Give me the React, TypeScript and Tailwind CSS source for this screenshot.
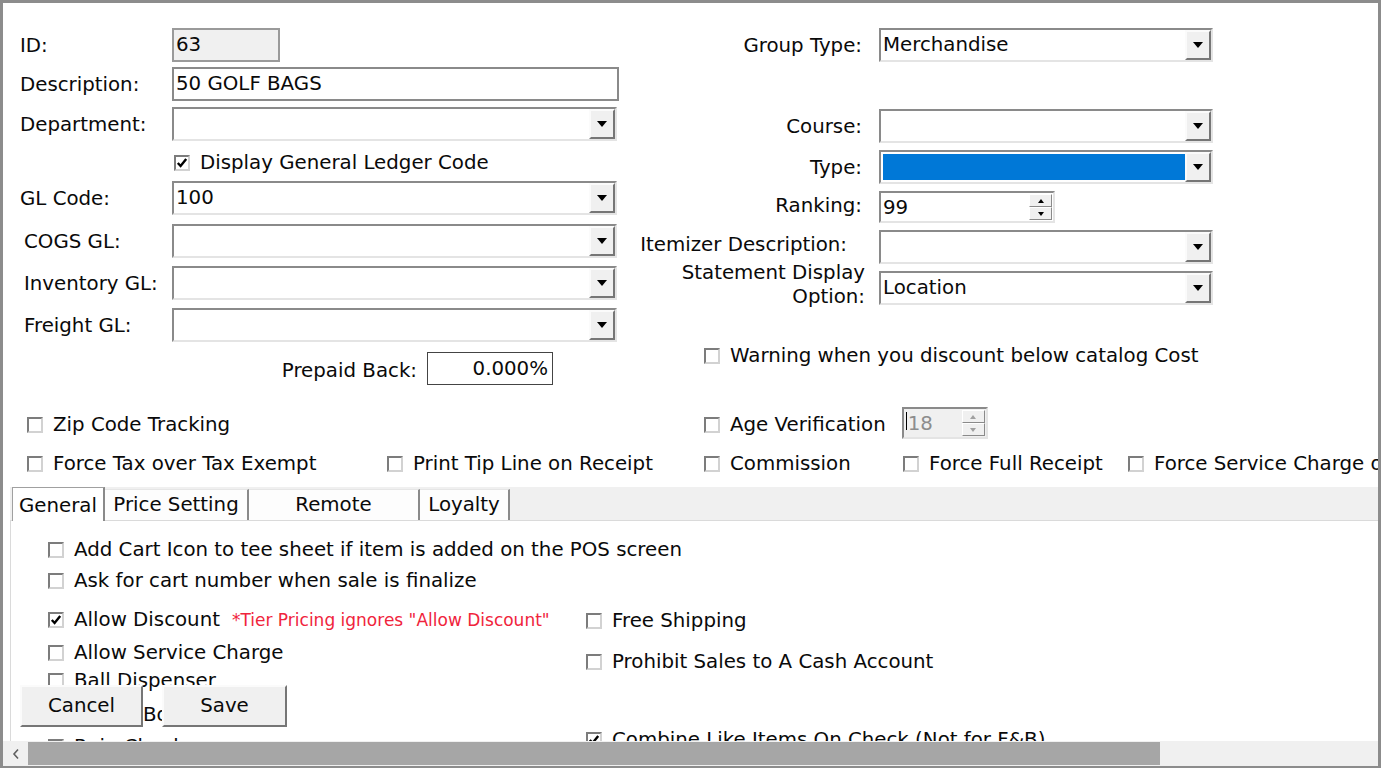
import React from 'react';

const sunken = 'border-2 border-t-[#8a8a8a] border-l-[#8a8a8a] border-b-[#e4e4e4] border-r-[#e4e4e4]';
const raised = 'border-2 border-t-[#fbfbfb] border-l-[#fbfbfb] border-b-[#767676] border-r-[#767676]';

function Tri({ up = false, small = false, color = '#000' }: { up?: boolean; small?: boolean; color?: string }) {
  const w = small ? 6 : 10;
  const h = small ? 4 : 6;
  return (
    <svg width={w} height={h} viewBox={`0 0 ${w} ${h}`}>
      <path d={up ? `M0 ${h}H${w}L${w / 2} 0z` : `M0 0H${w}L${w / 2} ${h}z`} fill={color} />
    </svg>
  );
}

function CheckBox({ checked = false }: { checked?: boolean }) {
  return (
    <span className="w-[16px] h-[16px] shrink-0 bg-white flex items-center justify-center border-2 border-t-[#7c7c7c] border-l-[#7c7c7c] border-b-[#d2d2d2] border-r-[#d2d2d2]">
      {checked && (
        <svg width="12" height="12" viewBox="0 0 12 12">
          <path d="M1.8 6L4.6 9L10.2 2" stroke="#000" strokeWidth="2.4" fill="none" />
        </svg>
      )}
    </span>
  );
}

function CheckItem({ label, checked = false, className = '' }: { label: string; checked?: boolean; className?: string }) {
  return (
    <div className={`flex items-center gap-[10px] h-[28px] whitespace-nowrap ${className}`}>
      <CheckBox checked={checked} />
      <span>{label}</span>
    </div>
  );
}

function Select({ value = '', w, highlight = false }: { value?: string; w: string; highlight?: boolean }) {
  return (
    <div className={`h-[34px] flex bg-white ${sunken} ${w}`}>
      <div className="flex-1 flex items-center pl-[2px] py-[2px] min-w-0">
        {highlight ? (
          <div className="w-full h-full bg-[#0078d7]" />
        ) : (
          <span className="whitespace-nowrap">{value}</span>
        )}
      </div>
      <div className={`w-[26px] h-full bg-[#f0f0f0] flex items-center justify-center ${raised}`}>
        <Tri />
      </div>
    </div>
  );
}

function Spinner({ value, w, disabled = false }: { value: string; w: string; disabled?: boolean }) {
  return (
    <div className={`h-[32px] flex ${sunken} ${w} ${disabled ? 'bg-[#f0f0f0]' : 'bg-white'}`}>
      <div className={`flex-1 flex items-center pl-[2px] pt-[2px] ${disabled ? 'text-[#8d8d8d]' : ''}`}>
        {disabled && <span className="w-px h-[18px] bg-black mr-[1px] -mt-[6px]" />}
        {value}
      </div>
      <div className="w-[24px] flex flex-col py-[1px] pr-[1px]">
        <div className="flex-1 bg-[#f0f0f0] flex items-center justify-center border border-t-white border-l-white border-b-[#8a8a8a] border-r-[#8a8a8a]">
          <Tri up small color={disabled ? '#a0a0a0' : '#000'} />
        </div>
        <div className="flex-1 bg-[#f0f0f0] flex items-center justify-center border border-t-white border-l-white border-b-[#8a8a8a] border-r-[#8a8a8a]">
          <Tri small color={disabled ? '#a0a0a0' : '#000'} />
        </div>
      </div>
    </div>
  );
}

function LeftRow({ label, mt, indent = false, children }: { label: string; mt: string; indent?: boolean; children: React.ReactNode }) {
  return (
    <div className={`flex items-center ${mt}`}>
      <span className={`w-[152px] whitespace-nowrap pt-[2px] ${indent ? 'pl-[4px]' : ''}`}>{label}</span>
      {children}
    </div>
  );
}

function RightRow({ label, mt, children, labelClass = '' }: { label: React.ReactNode; mt: string; children: React.ReactNode; labelClass?: string }) {
  return (
    <div className={`flex items-center ${mt}`}>
      <span className={`w-[222px] text-right whitespace-nowrap pt-[2px] ${labelClass}`}>{label}</span>
      <div className="ml-[17px]">{children}</div>
    </div>
  );
}

export default function App() {
  return (
    <div className="w-[1381px] h-[768px] overflow-hidden bg-white flex flex-col border-t-[3px] border-l-[3px] border-r-[3px] border-b-2 border-[#8c8c8c] font-['DejaVu_Sans',sans-serif] text-[19.8px] leading-none text-[#0a0a0a]">
      <div className="relative flex-1 overflow-hidden flex flex-col">
        {/* top form */}
        <div className="flex pt-[25px]">
          <div className="w-[637px] shrink-0 pl-[17px] flex flex-col">
            <LeftRow label="ID:" mt="mt-0">
              <div className="w-[108px] h-[34px] bg-[#f0f0f0] border-2 border-[#9a9a9a] flex items-center pl-[2px]">63</div>
            </LeftRow>
            <LeftRow label="Description:" mt="mt-[5px]">
              <div className="w-[447px] h-[34px] bg-white border-2 border-[#8a8a8a] flex items-center pl-[2px]">50 GOLF BAGS</div>
            </LeftRow>
            <LeftRow label="Department:" mt="mt-[6px]">
              <Select w="w-[445px]" />
            </LeftRow>
            <div className="h-[30px] mt-[7px] flex items-center ml-[154px]">
              <CheckItem label="Display General Ledger Code" checked />
            </div>
            <LeftRow label="GL Code:" mt="mt-[3px]">
              <Select w="w-[445px]" value="100" />
            </LeftRow>
            <LeftRow label="COGS GL:" mt="mt-[9px]" indent>
              <Select w="w-[445px]" />
            </LeftRow>
            <LeftRow label="Inventory GL:" mt="mt-[8px]" indent>
              <Select w="w-[445px]" />
            </LeftRow>
            <LeftRow label="Freight GL:" mt="mt-[8px]" indent>
              <Select w="w-[445px]" />
            </LeftRow>
            <div className="flex items-center mt-[10px]">
              <span className="w-[397px] text-right pt-[5px]">Prepaid Back:</span>
              <div className="ml-[10px] w-[126px] h-[33px] bg-white border border-[#444] flex items-center justify-end pr-[4px]">0.000%</div>
            </div>
          </div>

          <div className="flex flex-col">
            <RightRow label="Group Type:" mt="mt-0">
              <Select w="w-[334px]" value="Merchandise" />
            </RightRow>
            <RightRow label="Course:" mt="mt-[47px]">
              <Select w="w-[334px]" />
            </RightRow>
            <RightRow label="Type:" mt="mt-[7px]">
              <Select w="w-[334px]" highlight />
            </RightRow>
            <RightRow label="Ranking:" mt="mt-[7px]" labelClass="-mt-[4px]">
              <Spinner value="99" w="w-[176px]" />
            </RightRow>
            <RightRow label="Itemizer Description:" mt="mt-[7px]" labelClass="pr-[15px] -mt-[6px]">
              <Select w="w-[334px]" />
            </RightRow>
            <RightRow
              label={
                <span className="block leading-[24px] -mt-[11px] -mb-[3px] -mr-[3px]">
                  Statement Display
                  <br />
                  Option:
                </span>
              }
              mt="mt-[6px]"
            >
              <Select w="w-[334px]" value="Location" />
            </RightRow>
            <div className="mt-[35px] ml-[64px] h-[30px] flex items-center">
              <CheckItem label="Warning when you discount below catalog Cost" />
            </div>
          </div>
        </div>

        {/* option rows */}
        <div className="flex items-center pl-[24px] mt-[22px] h-[33px]">
          <div className="w-[360px] pt-[3px]"><CheckItem label="Zip Code Tracking" /></div>
          <div className="w-[317px]" />
          <div className="flex items-center gap-[16px]">
            <div className="pt-[3px]"><CheckItem label="Age Verification" /></div>
            <Spinner value="18" w="w-[86px]" disabled />
          </div>
        </div>
        <div className="flex items-center pl-[24px] mt-[11px] h-[30px] whitespace-nowrap">
          <div className="w-[360px] shrink-0"><CheckItem label="Force Tax over Tax Exempt" /></div>
          <div className="w-[317px] shrink-0"><CheckItem label="Print Tip Line on Receipt" /></div>
          <div className="w-[199px] shrink-0"><CheckItem label="Commission" /></div>
          <div className="w-[225px] shrink-0"><CheckItem label="Force Full Receipt" /></div>
          <div className="shrink-0"><CheckItem label="Force Service Charge on Receipt" /></div>
        </div>

        {/* tabs */}
        <div className="mt-[9px] ml-[7px] h-[34px] shrink-0 bg-[#f0f0f0] flex items-end pl-[2px] border-b border-[#dadada]">
          <div className="w-[93px] h-[34px] bg-white border-l border-t border-[#a0a0a0] border-r-2 border-r-[#8a8a8a] flex items-center justify-center pt-[3px] -mb-px">General</div>
          <div className="w-[144px] h-[31px] bg-[#fdfdfd] border-t border-[#e6e6e6] border-r-2 border-r-[#8a8a8a] flex items-center justify-center">Price Setting</div>
          <div className="w-[171px] h-[31px] bg-[#fdfdfd] border-t border-[#e6e6e6] border-r-2 border-r-[#8a8a8a] flex items-center justify-center">Remote</div>
          <div className="w-[90px] h-[31px] bg-[#fdfdfd] border-t border-[#e6e6e6] border-r-2 border-r-[#8a8a8a] flex items-center justify-center">Loyalty</div>
        </div>

        {/* tab panel */}
        <div className="flex-1 ml-[7px] border-l border-[#dadada] flex">
          <div className="w-[538px] ml-[37px] pt-[15px] flex flex-col shrink-0">
            <CheckItem label="Add Cart Icon to tee sheet if item is added on the POS screen" />
            <CheckItem label="Ask for cart number when sale is finalize" className="mt-[3px]" />
            <div className="flex items-center mt-[11px]">
              <CheckItem label="Allow Discount" checked />
              <span className="ml-[12px] text-[17px] text-[#f0243c] whitespace-nowrap">*Tier Pricing ignores "Allow Discount"</span>
            </div>
            <CheckItem label="Allow Service Charge" className="mt-[5px]" />
            <CheckItem label="Ball Dispenser" className="mt-0" />
            <CheckItem label="Range Box" className="mt-[6px]" />
            <CheckItem label="Rain Check" className="mt-[4px]" />
          </div>
          <div className="pt-[86px] flex flex-col">
            <CheckItem label="Free Shipping" />
            <CheckItem label="Prohibit Sales to A Cash Account" className="mt-[13px]" />
            <CheckItem label="Combine Like Items On Check (Not for F&B)" checked className="mt-[50px]" />
          </div>
        </div>

        {/* buttons lying over the panel */}
        <div className="absolute left-[17px] top-[682px] flex gap-[19px]">
          <button className={`w-[123px] h-[42px] bg-[#f0f0f0] flex items-center justify-center ${raised}`}>Cancel</button>
          <button className={`w-[125px] h-[42px] bg-[#f0f0f0] flex items-center justify-center ${raised}`}>Save</button>
        </div>
      </div>

      {/* horizontal scrollbar */}
      <div className="h-[25px] shrink-0 bg-[#f0f0f0] flex items-stretch">
        <div className="w-[25px] flex items-center justify-center">
          <svg width="8" height="12" viewBox="0 0 8 12">
            <path d="M6 1.5L2 6l4 4.5" stroke="#606060" strokeWidth="1.6" fill="none" />
          </svg>
        </div>
        <div className="w-[1132px] my-[1px] bg-[#a6a6a6]" />
      </div>
    </div>
  );
}
